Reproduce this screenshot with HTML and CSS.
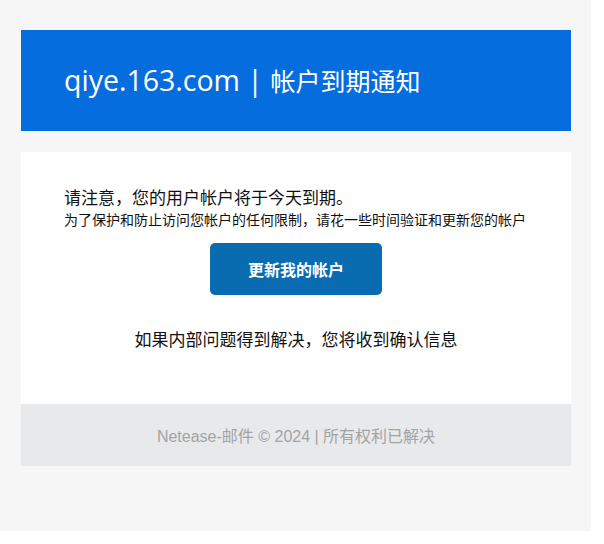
FILE: index.html
```html
<!DOCTYPE html>
<html lang="zh-CN">
<head>
<meta charset="utf-8">
<title>帐户到期通知</title>
<link rel="stylesheet" href="styles.css">
</head>
<body>
<div class="page">
  <div class="card">
    <div class="header">
      <h1 class="title"><span class="brand">qiye.163.com | </span><span class="title-cn">帐户到期通知</span></h1>
    </div>
    <div class="main">
      <p class="lead">请注意，您的用户帐户将于今天到期。</p>
      <p class="note">为了保护和防止访问您帐户的任何限制，请花一些时间验证和更新您的帐户</p>
      <div class="actions"><a class="btn" href="#">更新我的帐户</a></div>
      <p class="info">如果内部问题得到解决，您将收到确认信息</p>
    </div>
    <div class="footer">Netease-邮件 © 2024 | 所有权利已解决</div>
  </div>
</div>
</body>
</html>
```
FILE: styles.css
```css
html, body {
  margin: 0;
  padding: 0;
  background: #ffffff;
}
body {
  font-family: "Liberation Sans", "Noto Sans CJK SC", sans-serif;
  color: #111;
}
.page {
  width: 591px;
  height: 531px;
  box-sizing: border-box;
  background: #f6f6f6;
  padding-top: 30px;
}
.card {
  width: 550px;
  margin-left: 21px;
}
.header {
  height: 101px;
  background: #066ddf;
  display: flex;
  align-items: center;
  padding-left: 43px;
  box-sizing: border-box;
}
.title {
  margin: 0;
  font-size: 28px;
  font-weight: normal;
  color: #ffffff;
  line-height: 1;
  white-space: pre;
}
.brand {
  font-family: "Open Sans", "Liberation Sans", sans-serif;
  font-size: 28.5px;
}
.title-cn {
  font-family: "Noto Sans CJK SC", sans-serif;
  font-size: 25px;
}
.main {
  margin-top: 21px;
  background: #ffffff;
  height: 252px;
  box-sizing: border-box;
  padding: 33px 43px 0;
}
.lead {
  margin: 0;
  font-size: 17px;
  line-height: 24px;
  font-family: "Noto Sans CJK SC", sans-serif;
}
.note {
  margin: 0;
  font-size: 14px;
  line-height: 20px;
  font-family: "Noto Sans CJK SC", sans-serif;
}
.actions {
  display: flex;
  justify-content: center;
  margin-top: 14px;
}
.btn {
  display: flex;
  align-items: center;
  justify-content: center;
  width: 172px;
  height: 52px;
  background: #0a6cb0;
  border-radius: 5px;
  color: #ffffff;
  font-weight: bold;
  font-size: 16px;
  text-decoration: none;
  font-family: "Noto Sans CJK SC", sans-serif;
}
.info {
  margin: 32px 0 0;
  text-align: center;
  font-size: 17px;
  line-height: 24px;
  font-family: "Noto Sans CJK SC", sans-serif;
}
.footer {
  height: 62px;
  background: #e8e9eb;
  display: flex;
  align-items: center;
  justify-content: center;
  color: #a3a3a3;
  font-size: 16px;
}
```
